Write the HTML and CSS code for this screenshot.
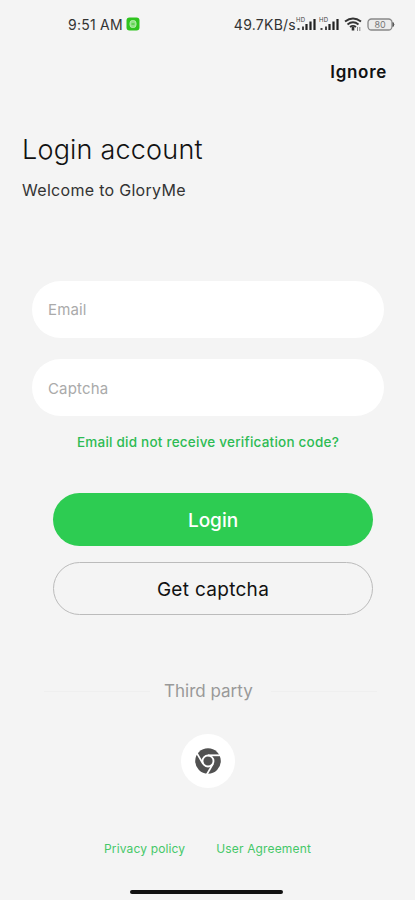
FILE: index.html
```html
<!DOCTYPE html>
<html lang="en">
<head>
	<meta charset="utf-8">
	<meta name="viewport" content="width=device-width, initial-scale=1">
	<title>Login account</title>
	<link rel="stylesheet" href="styles.css">
</head>
<body>
	<div class="statusbar">
		<span class="time">9:51 AM</span>
		<svg class="app-badge" width="14" height="14" viewBox="0 0 14 14">
			<rect x="0.5" y="0.5" width="13" height="13" rx="3" fill="#2fc41f"/>
			<rect x="4" y="3.5" width="6" height="7" rx="2.6" fill="#8fe184" stroke="#b5efad"/>
			<path d="M5.5 7h3" stroke="#2fc41f"/>
		</svg>
		<span class="speed">49.7KB/s</span>
		<svg class="signal" width="21" height="16" viewBox="0 0 21 16">
			<text x="0" y="6" class="hd">HD</text>
			<path d="M2.5 14v-2M7 14v-3.5" stroke="#444" stroke-width="2"/>
			<path d="M10.5 14V8M14.5 14V5.5M18.5 14V3" stroke="#222" stroke-width="2.2"/>
		</svg>
		<svg class="signal" width="21" height="16" viewBox="0 0 21 16">
			<text x="0" y="6" class="hd">HD</text>
			<path d="M2.5 14v-2M7 14v-3.5" stroke="#444" stroke-width="2"/>
			<path d="M10.5 14V8M14.5 14V5.5M18.5 14V3" stroke="#222" stroke-width="2.2"/>
		</svg>
		<svg class="wifi" width="18" height="16" viewBox="0 0 18 16" fill="none" stroke="#333" stroke-width="1.9">
			<path d="M1 5.6Q9-.6 17 5.6M3.5 8.4Q9 4.2 14.5 8.4M6 11Q9 8.8 12 11"/>
			<path d="M9 11v3.5" stroke-width="2.6"/>
			<path d="M13.5 11v4M15.8 11v4" stroke="#888" stroke-width="1"/>
		</svg>
		<svg class="battery" width="28" height="13" viewBox="0 0 28 13">
			<rect x="1" y="1" width="24" height="11" rx="3.5" fill="#ececec" stroke="#888" stroke-width="1.3"/>
			<path d="M26 4.5q1.8 2 0 4z" fill="#555" stroke="#555"/>
			<text x="13" y="9.8" class="level">80</text>
		</svg>
	</div>

	<div class="topbar">
		<a class="ignore">Ignore</a>
	</div>

	<div class="heading">
		<h1>Login account</h1>
		<p>Welcome to GloryMe</p>
	</div>

	<form class="login-form">
		<input class="email" type="email" placeholder="Email">
		<input class="captcha" type="text" placeholder="Captcha">
		<a class="help">Email did not receive verification code?</a>
		<button class="btn btn-login" type="button">Login</button>
		<button class="btn btn-captcha" type="button">Get captcha</button>
	</form>

	<div class="divider">
		<span class="line"></span>
		<span class="label">Third party</span>
		<span class="line"></span>
	</div>

	<div class="third-party">
		<button class="chrome" type="button" aria-label="Chrome">
			<svg width="26" height="26" viewBox="-13 -13 26 26">
				<circle r="12.8" fill="#515151"/>
				<g stroke="#fff" stroke-width="1.8">
					<circle r="5.5" fill="#515151"/>
					<path d="M0-5.7H13"/>
					<path d="M0-5.7H13" transform="rotate(120)"/>
					<path d="M0-5.7H13" transform="rotate(240)"/>
				</g>
			</svg>
		</button>
	</div>

	<div class="links">
		<a class="privacy">Privacy policy</a>
		<a class="agreement">User Agreement</a>
	</div>

	<div class="home-bar"></div>
</body>
</html>
```

FILE: styles.css
```css
* {
	box-sizing: border-box;
}

body {
	margin: 0;
	height: 900px;
	overflow: hidden;
	display: flex;
	flex-direction: column;
	background-color: #f4f4f4;
	color: #111;
	font-family: Inter, "Noto Sans", sans-serif;
}

/* status bar */
.statusbar {
	display: flex;
	align-items: center;
	height: 48px;
	padding: 0 20px 0 68px;
	font-size: 14px;
	letter-spacing: 0.25px;
	color: #333;
}
.app-badge {
	margin-left: 3px;
}
.speed {
	margin-left: auto;
}
.signal {
	margin-right: 2px;
}
.wifi {
	margin: 0 5px 0 2px;
}
.hd {
	font-size: 6px;
	fill: #444;
}
.level {
	font-size: 9px;
	letter-spacing: 0;
	fill: #777;
	text-anchor: middle;
}

.topbar {
	display: flex;
	justify-content: flex-end;
	height: 48px;
	padding-right: 28px;
	line-height: 48px;
}
.ignore {
	font-size: 17px;
	font-weight: 600;
	letter-spacing: 0.7px;
}

.heading {
	height: 185px;
	padding: 36px 22px 0;
}
.heading h1 {
	margin: 0;
	font-size: 27px;
	font-weight: 300;
	line-height: 36px;
	letter-spacing: 0.2px;
}
.heading p {
	margin: 9px 0 0;
	font-size: 16px;
	line-height: 26px;
	letter-spacing: 0.3px;
	color: #333;
}

/* form */
.login-form {
	display: flex;
	flex-direction: column;
	padding: 0 31px 0 32px;
}
.login-form input {
	height: 57px;
	margin-bottom: 21px;
	padding: 0 16px;
	border: none;
	border-radius: 29px;
	background-color: #fff;
	font: 15px Inter, "Noto Sans", sans-serif;
	letter-spacing: 0.15px;
}
.login-form input.captcha {
	margin-bottom: 14px;
	padding-top: 2px;
}
.login-form input::placeholder {
	color: #aaa;
}
.help {
	align-self: center;
	font-size: 13.5px;
	font-weight: 500;
	line-height: 24px;
	letter-spacing: 0.23px;
	color: #2dbb53;
}
.btn {
	height: 53px;
	margin: 0 11px 0 21px;
	padding: 2px 0 0;
	border: none;
	border-radius: 27px;
	font: 500 19px Inter, "Noto Sans", sans-serif;
}
.btn-login {
	margin-top: 39px;
	background-color: #2dcc52;
	color: #fff;
}
.btn-captcha {
	margin-top: 16px;
	border: 1px solid #bbb;
	background: none;
	color: #111;
	font-weight: 400;
	letter-spacing: 0.3px;
}

.divider {
	display: flex;
	align-items: center;
	height: 30px;
	margin: 61px 31px 0 32px;
}
.divider .line {
	flex: 1;
	height: 1px;
	margin: 0 14px 0 12px;
	background-color: #efefef;
}
.divider .line:last-child {
	margin: 0 0 0 18px;
}
.divider .line:last-child,
.divider .line:first-child {
	flex: 0 0 106px;
}
.divider .label {
	font-size: 17px;
	white-space: nowrap;
	color: #999;
}

.third-party {
	display: flex;
	justify-content: center;
	margin-top: 28px;
}
.chrome {
	display: flex;
	align-items: center;
	justify-content: center;
	width: 54px;
	height: 54px;
	padding: 0;
	border: none;
	border-radius: 50%;
	background-color: #fff;
}

.links {
	display: flex;
	justify-content: center;
	gap: 31px;
	margin-top: 51px;
	font-size: 12px;
	line-height: 20px;
	letter-spacing: 0.15px;
	color: #45c868;
}

.home-bar {
	width: 153px;
	height: 4px;
	margin: auto auto 6px 130px;
	border-radius: 2px;
	background-color: #111;
}
```
